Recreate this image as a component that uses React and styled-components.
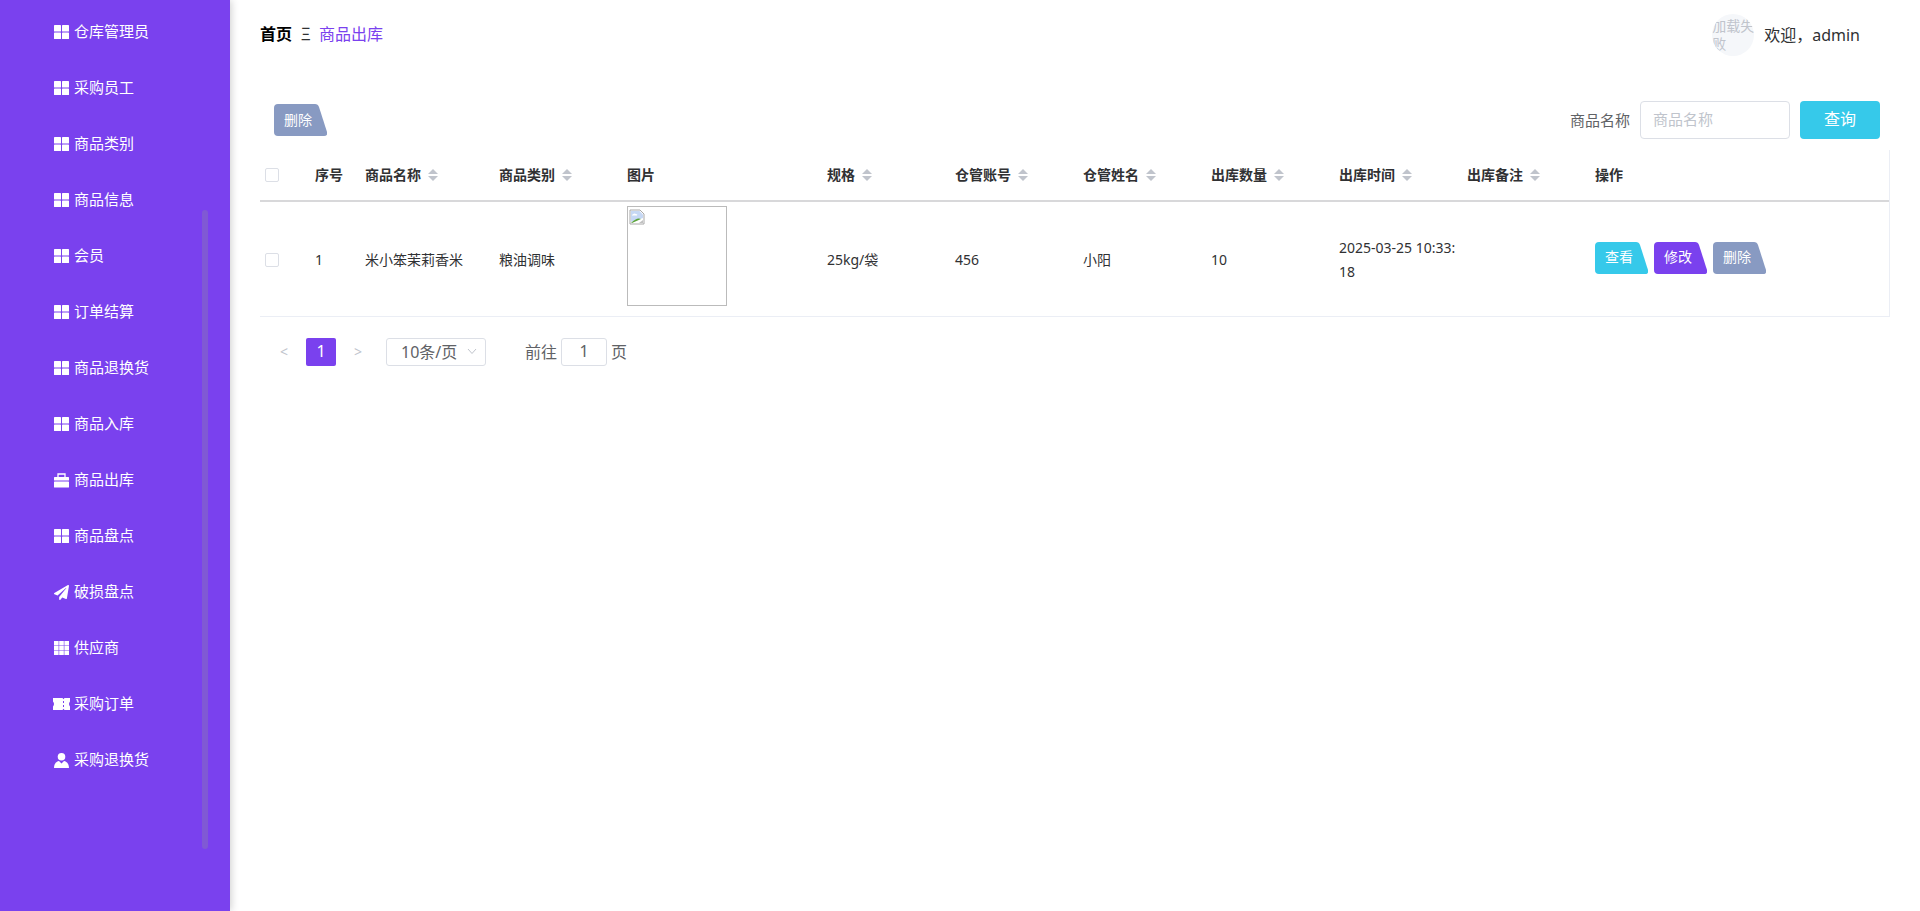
import styled, { createGlobalStyle } from "styled-components";
import { FaPaperPlane } from "react-icons/fa";

const GlobalStyle = createGlobalStyle`
  html, body {
    margin: 0;
    padding: 0;
    height: 100%;
    background: #fff;
    font-family: "Noto Sans", "Noto Sans CJK SC", sans-serif;
    color: #303133;
  }
  * { box-sizing: border-box; }
`;

const PURPLE = "#7a41ee";
const CYAN = "#36c9ea";
const SLATE = "#889ac2";

const Page = styled.div`
  display: flex;
  height: 911px;
  overflow: hidden;
`;

const Sidebar = styled.aside`
  position: relative;
  flex: 0 0 230px;
  padding-top: 4px;
  background: ${PURPLE};
  box-shadow: 1px 0 8px rgba(0, 0, 0, 0.2);
`;

const MenuItem = styled.div`
  display: flex;
  align-items: center;
  gap: 5px;
  height: 56px;
  padding-left: 54px;
  font-size: 15px;
  color: #fff;
`;

const MenuText = styled.span`
  padding-bottom: 3px;
`;

const IconBox = styled.span`
  display: flex;
  flex: 0 0 15px;
  min-width: 0;
  justify-content: center;
`;

const ScrollThumb = styled.div`
  position: absolute;
  top: 210px;
  left: 202px;
  width: 6px;
  height: 639px;
  border-radius: 3px;
  background: rgba(144, 147, 153, 0.3);
`;

const Main = styled.main`
  flex: 1;
  padding: 0 30px;
`;

const Header = styled.header`
  display: flex;
  align-items: center;
  justify-content: space-between;
  height: 70px;
  padding-right: 30px;
  margin-bottom: 31px;
`;

const Breadcrumb = styled.div`
  display: flex;
  align-items: center;
  padding-bottom: 2px;
  font-size: 16px;
  line-height: 22px;
`;

const Home = styled.span`
  font-weight: 700;
  color: #000;
`;

const Separator = styled.span`
  display: inline-block;
  margin: 0 2px 0 9px;
  transform: scaleX(0.6);
  transform-origin: left center;
  color: #303133;
`;

const Current = styled.span`
  color: ${PURPLE};
`;

const UserArea = styled.div`
  display: flex;
  align-items: center;
  gap: 10px;
  font-size: 16px;
`;

const Welcome = styled.span`
  padding-bottom: 2px;
`;

const Avatar = styled.div`
  width: 42px;
  height: 42px;
  border-radius: 50%;
  overflow: hidden;
  background: #f5f7fa;
  color: #c0c4cc;
  font-size: 14px;
  line-height: 18px;
  padding-top: 3px;
  word-break: break-all;
`;

const Toolbar = styled.div`
  display: flex;
  align-items: center;
  justify-content: space-between;
  height: 38px;
  padding: 0 10px 0 14px;
  margin-bottom: 11px;
`;

const SearchGroup = styled.div`
  display: flex;
  align-items: center;
`;

const SearchLabel = styled.label`
  margin-right: 10px;
  padding-bottom: 2px;
  font-size: 15px;
  color: #606266;
`;

const SearchInput = styled.input`
  width: 150px;
  height: 38px;
  padding: 0 12px 2px;
  margin-right: 10px;
  border: 1px solid #dcdfe6;
  border-radius: 4px;
  outline: none;
  font: inherit;
  font-size: 15px;

  &::placeholder {
    color: #c0c4cc;
  }
`;

const SearchButton = styled.button`
  width: 80px;
  height: 38px;
  padding: 0 0 4px;
  border: 0;
  border-radius: 4px;
  background: ${CYAN};
  color: #fff;
  font: inherit;
  font-size: 16px;
`;

const Trapezoid = styled.button`
  flex: 0 0 53px;
  width: 53px;
  height: 32px;
  padding: 0 0 2px 10px;
  border: 0;
  text-align: left;
  color: #fff;
  font: inherit;
  font-size: 14px;
  background: ${(p) => p.$color};
  clip-path: path("M4 0 H41 Q44 0 45 3 L53 28 Q54 32 50 32 H4 Q0 32 0 28 V4 Q0 0 4 0 Z");
`;

const TableFrame = styled.table`
  width: 100%;
  table-layout: fixed;
  border-collapse: separate;
  border-spacing: 0;
  border-right: 1px solid #ebeef5;
  font-size: 14px;
`;

const HeadCell = styled.th`
  height: 52px;
  padding: 0 0 2px ${(p) => (p.$tight ? 5 : 10)}px;
  border-bottom: 2px solid #d8d8da;
  text-align: left;
  font-weight: 700;
  color: #303133;
  white-space: nowrap;
`;

const BodyCell = styled.td`
  height: 115px;
  padding: 2px 0 0 ${(p) => (p.$tight ? 5 : 10)}px;
  border-bottom: 1px solid #ebeef5;
  color: #303133;
  line-height: 24px;
  word-break: break-all;
`;

const Check = styled.span`
  display: block;
  width: 14px;
  height: 14px;
  margin-top: ${(p) => p.$offset || 0}px;
  border: 1px solid #dcdfe6;
  border-radius: 2px;
  background: #fff;
`;

const SortCaret = styled.svg`
  display: inline-block;
  width: 10px;
  height: 14px;
  margin-left: 7px;
  vertical-align: -2px;
`;

const BrokenImage = styled.div`
  width: 100px;
  height: 100px;
  margin: 2px 0 10px;
  padding: 1px;
  border: 1px solid #bbb;
`;

const Actions = styled.div`
  display: flex;
  gap: 6px;
  margin-bottom: 4px;
`;

const Pager = styled.div`
  display: flex;
  align-items: center;
  height: 28px;
  margin: 21px 0 0 9px;
  font-size: 16px;
  color: #606266;
`;

const PagerText = styled.span`
  padding-bottom: 2px;
`;

const PagerArrow = styled.span`
  width: 30px;
  margin-right: ${(p) => p.$gap || 0}px;
  padding-bottom: 2px;
  text-align: center;
  font-size: 14px;
  color: #c0c4cc;
`;

const PagerActive = styled.span`
  width: 30px;
  height: 28px;
  margin: 0 7px;
  border-radius: 2px;
  background: ${PURPLE};
  color: #fff;
  text-align: center;
  line-height: 26px;
  font-size: 16px;
`;

const PageSize = styled.div`
  display: flex;
  align-items: center;
  justify-content: space-between;
  width: 100px;
  height: 28px;
  padding: 0 7px 2px 14px;
  margin: 0 39px 0 6px;
  border: 1px solid #dcdfe6;
  border-radius: 3px;
`;

const JumpInput = styled.div`
  width: 46px;
  height: 28px;
  margin: 0 4px;
  border: 1px solid #dcdfe6;
  border-radius: 3px;
  text-align: center;
  line-height: 24px;
`;

const Glyph = styled.svg`
  flex-shrink: 0;
  fill: #fff;
`;

function GridLargeIcon() {
  return (
    <Glyph width="15" height="14" viewBox="0 0 15 14">
      <rect width="7" height="6.500" rx="0.6" />
      <rect x="8" width="7" height="6.500" rx="0.6" />
      <rect y="7.500" width="7" height="6.500" rx="0.6" />
      <rect x="8" y="7.500" width="7" height="6.500" rx="0.6" />
    </Glyph>
  );
}

function GridIcon() {
  const cells = [0, 5.2, 10.4];
  const rows = [0, 4.8, 9.6];
  return (
    <Glyph width="15" height="14" viewBox="0 0 15 14">
      {rows.flatMap((y) =>
        cells.map((x) => <rect key={`${x}-${y}`} x={x} y={y} width="4.600" height="4.400" />)
      )}
    </Glyph>
  );
}

function BriefcaseIcon() {
  return (
    <Glyph width="15" height="15" viewBox="0 0 15 15">
      <path d="M4 4 V1 H11 V4" fill="none" stroke="#fff" strokeWidth="1.300" />
      <rect y="4" width="15" height="3.500" rx="0.6" />
      <rect y="8.500" width="15" height="6" rx="0.6" />
    </Glyph>
  );
}

function TicketIcon() {
  return (
    <Glyph width="17" height="12" viewBox="0 0 17 12">
      <path
        fillRule="evenodd"
        d="M0 0 H9.500 L10.500 1.200 L11.500 0 H17 V3.500 Q15 6 17 8.500 V12 H11.500 L10.500 10.800 L9.500 12 H0 V8.500 Q2 6 0 3.500 Z M10 3 H11 V5 H10 Z M10 7 H11 V9 H10 Z"
      />
    </Glyph>
  );
}

function UserIcon() {
  return (
    <Glyph width="15" height="15" viewBox="0 0 15 15">
      <circle cx="7.500" cy="3.800" r="3.800" />
      <path d="M0 15 C0 10.500 2.500 8.500 5 8 L7.500 10.500 L10 8 C12.500 8.500 15 10.500 15 15 Z" />
    </Glyph>
  );
}

function PlaneIcon() {
  return <FaPaperPlane size={15} />;
}

const menu = [
  { name: "仓库管理员", icon: GridLargeIcon },
  { name: "采购员工", icon: GridLargeIcon },
  { name: "商品类别", icon: GridLargeIcon },
  { name: "商品信息", icon: GridLargeIcon },
  { name: "会员", icon: GridLargeIcon },
  { name: "订单结算", icon: GridLargeIcon },
  { name: "商品退换货", icon: GridLargeIcon },
  { name: "商品入库", icon: GridLargeIcon },
  { name: "商品出库", icon: BriefcaseIcon },
  { name: "商品盘点", icon: GridLargeIcon },
  { name: "破损盘点", icon: PlaneIcon },
  { name: "供应商", icon: GridIcon },
  { name: "采购订单", icon: TicketIcon },
  { name: "采购退换货", icon: UserIcon },
];

const columns = [
  { width: 45, tight: true, check: true },
  { width: 50, title: "序号" },
  { width: 134, title: "商品名称", sort: true },
  { width: 128, title: "商品类别", sort: true },
  { width: 200, title: "图片" },
  { width: 128, title: "规格", sort: true },
  { width: 128, title: "仓管账号", sort: true },
  { width: 128, title: "仓管姓名", sort: true },
  { width: 128, title: "出库数量", sort: true },
  { width: 128, title: "出库时间", sort: true },
  { width: 128, title: "出库备注", sort: true },
  { width: 304, title: "操作" },
];

function Caret() {
  return (
    <SortCaret viewBox="0 0 10 14">
      <path d="M5 1 L10 6 H0 Z" fill="#c0c4cc" />
      <path d="M5 13 L0 8 H10 Z" fill="#c0c4cc" />
    </SortCaret>
  );
}

function BrokenIcon() {
  return (
    <svg width="16" height="16" viewBox="0 0 16 16">
      <path d="M1 1 H11 L15 5 V15 H1 Z" fill="#fff" stroke="#a8a8a8" />
      <path d="M2 2 H10.500 L14 5.500 V9 L2 13 Z" fill="#c6d8f4" />
      <path d="M3 6 Q5 3.500 7 5 Q9 5 8 6.500 H3 Z" fill="#fff" />
      <path d="M2 14 Q8 8 12 10 L3 14 Z" fill="#5ba33a" />
      <path d="M10 14 L14 11 V14 Z" fill="#c0c0c0" />
    </svg>
  );
}

export default function App() {
  return (
    <Page>
      <GlobalStyle />
      <Sidebar>
        {menu.map(({ name, icon: Icon }) => (
          <MenuItem key={name}>
            <IconBox>
              <Icon />
            </IconBox>
            <MenuText>{name}</MenuText>
          </MenuItem>
        ))}
        <ScrollThumb />
      </Sidebar>

      <Main>
        <Header>
          <Breadcrumb>
            <Home>首页</Home>
            <Separator>三</Separator>
            <Current>商品出库</Current>
          </Breadcrumb>
          <UserArea>
            <Avatar>加载失败</Avatar>
            <Welcome>欢迎，admin</Welcome>
          </UserArea>
        </Header>

        <Toolbar>
          <Trapezoid $color={SLATE}>删除</Trapezoid>
          <SearchGroup>
            <SearchLabel>商品名称</SearchLabel>
            <SearchInput placeholder="商品名称" />
            <SearchButton>查询</SearchButton>
          </SearchGroup>
        </Toolbar>

        <TableFrame>
          <colgroup>
            {columns.map((col, i) => (
              <col key={i} width={col.width} />
            ))}
          </colgroup>
          <thead>
            <tr>
              {columns.map((col, i) => (
                <HeadCell key={i} $tight={col.tight}>
                  {col.check ? <Check $offset={2} /> : col.title}
                  {col.sort && <Caret />}
                </HeadCell>
              ))}
            </tr>
          </thead>
          <tbody>
            <tr>
              <BodyCell $tight>
                <Check />
              </BodyCell>
              <BodyCell>1</BodyCell>
              <BodyCell>米小笨茉莉香米</BodyCell>
              <BodyCell>粮油调味</BodyCell>
              <BodyCell>
                <BrokenImage>
                  <BrokenIcon />
                </BrokenImage>
              </BodyCell>
              <BodyCell>25kg/袋</BodyCell>
              <BodyCell>456</BodyCell>
              <BodyCell>小阳</BodyCell>
              <BodyCell>10</BodyCell>
              <BodyCell>2025-03-25 10:33:18</BodyCell>
              <BodyCell />
              <BodyCell>
                <Actions>
                  <Trapezoid $color={CYAN}>查看</Trapezoid>
                  <Trapezoid $color={PURPLE}>修改</Trapezoid>
                  <Trapezoid $color={SLATE}>删除</Trapezoid>
                </Actions>
              </BodyCell>
            </tr>
          </tbody>
        </TableFrame>

        <Pager>
          <PagerArrow>&lt;</PagerArrow>
          <PagerActive>1</PagerActive>
          <PagerArrow $gap={7}>&gt;</PagerArrow>
          <PageSize>
            10条/页
            <svg width="12" height="12" viewBox="0 0 12 12">
              <path d="M2 4 L6 8.500 L10 4" fill="none" stroke="#c0c4cc" />
            </svg>
          </PageSize>
          <PagerText>前往</PagerText>
          <JumpInput>1</JumpInput>
          <PagerText>页</PagerText>
        </Pager>
      </Main>
    </Page>
  );
}
